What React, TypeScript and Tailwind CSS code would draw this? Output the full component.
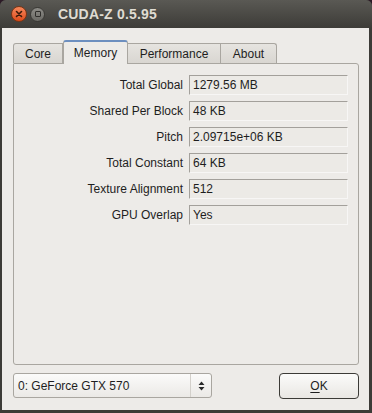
import React from "react";

const rows: [string, string][] = [
  ["Total Global", "1279.56 MB"],
  ["Shared Per Block", "48 KB"],
  ["Pitch", "2.09715e+06 KB"],
  ["Total Constant", "64 KB"],
  ["Texture Alignment", "512"],
  ["GPU Overlap", "Yes"],
];

export default function App() {
  return (
    <div
      className="w-[372px] h-[413px] bg-[#2c1a26] overflow-hidden"
      style={{ fontFamily: '"Liberation Sans", Arial, sans-serif' }}
    >
      <div className="w-[372px] h-[413px] flex flex-col rounded-t-[6px] overflow-hidden bg-[#3c3b37]">
        {/* title bar */}
        <div className="h-[28px] shrink-0 flex items-center bg-gradient-to-b from-[#5a5954] to-[#3d3c38] pl-[11px]">
          <div className="w-[16px] h-[16px] rounded-full bg-gradient-to-b from-[#f5875a] to-[#dd4a17] border border-[#7a3516] flex items-center justify-center">
            <svg width="8" height="8" viewBox="0 0 8 8">
              <path d="M1.5 1.5 L6.5 6.5 M6.5 1.5 L1.5 6.5" stroke="#3a1a0a" strokeWidth="1.6" strokeLinecap="round" />
            </svg>
          </div>
          <div className="ml-[3px] w-[15px] h-[15px] rounded-full bg-gradient-to-b from-[#8c8b86] to-[#6b6a65] border border-[#3a3935] flex items-center justify-center">
            <div className="w-[6px] h-[6px] border border-[#2f2e2b] rounded-[1px]" />
          </div>
          <div className="ml-[13px] text-[14px] font-bold text-[#dfdbd2] leading-none tracking-[0.2px]">
            CUDA-Z 0.5.95
          </div>
        </div>
        {/* body */}
        <div className="flex-1 flex ml-[2px] mr-[3px] mb-[3px] bg-[#edebe8] flex-col pl-[11px] pr-[10px] pt-[12px] text-[12px] text-[#1e1e1e]">
          {/* tabs */}
          <div className="flex items-end h-[23px] relative z-10">
            <div className="w-[50px] h-[20px] border border-[#a9a6a0] border-b-0 rounded-tl-[3px] bg-gradient-to-b from-[#e6e4e0] to-[#d9d6d1] flex items-center justify-center mb-0">
              Core
            </div>
            <div className="w-[65px] h-[24px] border border-[#a9a6a0] border-b-0 border-t-[#6d8fbf] border-t-2 rounded-t-[3px] bg-[#edebe8] flex items-center justify-center mb-[-1px]">
              Memory
            </div>
            <div className="w-[93px] h-[20px] border border-[#a9a6a0] border-b-0 border-l-0 bg-gradient-to-b from-[#e6e4e0] to-[#d9d6d1] flex items-center justify-center">
              Performance
            </div>
            <div className="w-[56px] h-[20px] border border-[#a9a6a0] border-b-0 border-l-0 rounded-tr-[3px] bg-gradient-to-b from-[#e6e4e0] to-[#d9d6d1] flex items-center justify-center">
              About
            </div>
          </div>
          {/* pane */}
          <div className="h-[302px] border border-[#a9a6a0] rounded-b-[3px] rounded-tr-[3px] bg-[#edebe8] pt-[11px] pr-[9px] flex flex-col gap-[6px]">
            {rows.map(([label, value]) => (
              <div key={label} className="flex items-center h-[20px]">
                <div className="w-[169px] text-right">{label}</div>
                <div className="ml-[6px] w-[159px] h-[20px] border border-[#a3a09b] border-r-[#f7f6f5] border-b-[#f7f6f5] bg-[#eceae6] flex items-center pl-[3px]">
                  {value}
                </div>
              </div>
            ))}
          </div>
          {/* bottom */}
          <div className="flex items-start mt-[8px]">
            <div className="w-[199px] h-[25px] border border-[#a9a6a0] rounded-[3px] bg-gradient-to-b from-[#fbfbfa] to-[#ebe9e6] flex items-center">
              <div className="flex-1 pl-[4px]">0: GeForce GTX 570</div>
              <div className="w-[21px] h-full border-l border-[#d3d0cb] flex items-center justify-center">
                <svg width="7" height="12" viewBox="0 0 7 12">
                  <path d="M0.5 5 L3.5 1.5 L6.5 5 Z M0.5 7 L3.5 10.5 L6.5 7 Z" fill="#2a2a2a" />
                </svg>
              </div>
            </div>
            <div className="ml-[67px] w-[80px] h-[26px] border border-[#3c3b37] rounded-[4px] bg-gradient-to-b from-[#fbfbfa] to-[#e9e7e3] flex items-center justify-center">
              <span>
                <span className="underline underline-offset-[2px]">O</span>K
              </span>
            </div>
          </div>
        </div>
      </div>
    </div>
  );
}
